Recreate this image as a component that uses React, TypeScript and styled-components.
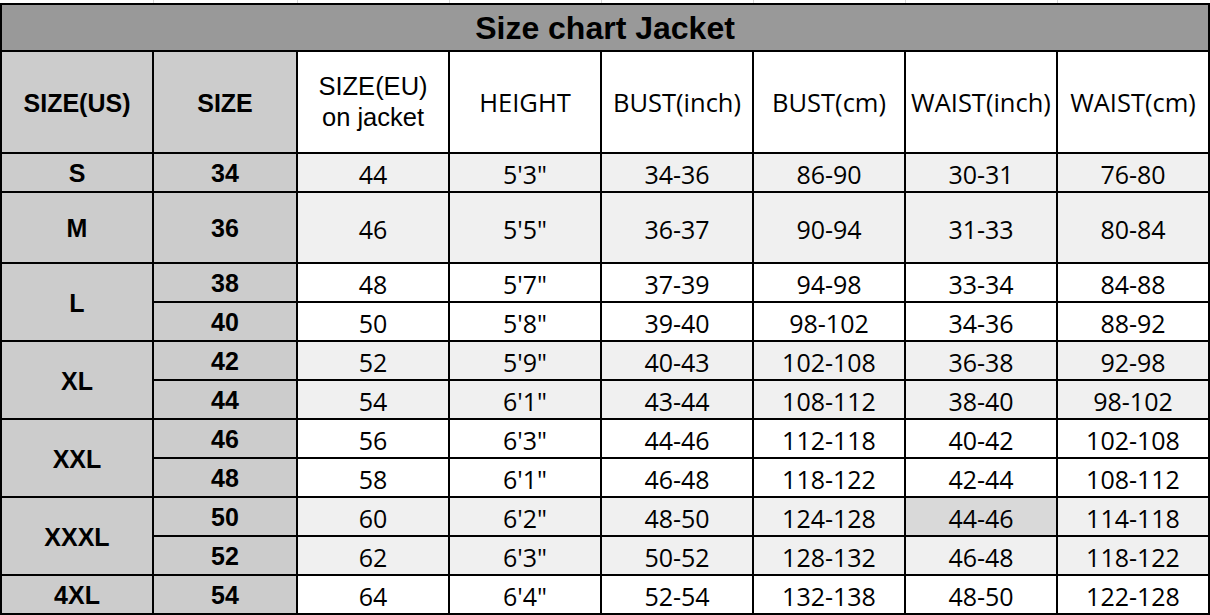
import React from "react";
import styled, { createGlobalStyle, css } from "styled-components";

const GlobalStyle = createGlobalStyle`
  html, body {
    margin: 0;
    padding: 0;
    background: #ffffff;
  }
  body {
    font-family: "Open Sans", "Liberation Sans", Arial, sans-serif;
    color: #000000;
  }
`;

const COLUMNS = "150px 142px repeat(6, 150px)";

const Page = styled.div`
  width: 1210px;
  display: flex;
  flex-direction: column;
`;

const SheetEdge = styled.div`
  display: grid;
  grid-template-columns: ${COLUMNS};
  column-gap: 2px;
  padding: 0 2px;
  height: 3px;
  background: #ffffff;
`;

const EdgeCell = styled.div`
  position: relative;
  &:not(:last-child)::after {
    content: "";
    position: absolute;
    top: 0;
    bottom: 0;
    right: -2px;
    width: 1px;
    background: #d8d8d8;
  }
`;

const Chart = styled.div`
  display: grid;
  grid-template-columns: ${COLUMNS};
  grid-template-rows: 45px 100px 37px 69px repeat(9, 37px);
  gap: 2px;
  padding: 2px;
  background: #000000;
`;

const Title = styled.div`
  grid-column: 1 / -1;
  background: #999999;
  display: flex;
  align-items: center;
  justify-content: center;
  font-family: "Liberation Sans", Arial, sans-serif;
  font-weight: 700;
  font-size: 32px;
  padding-top: 1px;
`;

type Tone = "key" | "white" | "light" | "mark";

const toneColor: Record<Tone, string> = {
  key: "#cccccc",
  white: "#ffffff",
  light: "#f0f0f0",
  mark: "#d9d9d9",
};

const Cell = styled.div<{ $tone: Tone; $span?: number }>`
  background: ${(p) => toneColor[p.$tone]};
  display: flex;
  align-items: center;
  justify-content: center;
  text-align: center;
  white-space: nowrap;
  ${(p) =>
    p.$span && p.$span > 1
      ? css`
          grid-row: span ${p.$span};
        `
      : ""}
`;

const KeyCell = styled(Cell)`
  font-family: "Liberation Sans", Arial, sans-serif;
  font-weight: 700;
  font-size: 25px;
  padding-top: 2px;
`;

const HeadCell = styled(Cell)<{ $arial?: boolean }>`
  font-family: ${(p) =>
    p.$arial ? `"Liberation Sans", Arial, sans-serif` : `"Open Sans", sans-serif`};
  font-size: 25.5px;
  line-height: 31px;
  flex-direction: column;
`;

const ValueCell = styled(Cell)`
  font-family: "Open Sans", sans-serif;
  font-size: 25px;
  padding-top: 2px;
`;

type Group = {
  us: string;
  tone: Tone;
  rows: string[][];
};

const groups: Group[] = [
  { us: "S", tone: "light", rows: [["34", "44", `5'3"`, "34-36", "86-90", "30-31", "76-80"]] },
  { us: "M", tone: "light", rows: [["36", "46", `5'5"`, "36-37", "90-94", "31-33", "80-84"]] },
  {
    us: "L",
    tone: "white",
    rows: [
      ["38", "48", `5'7"`, "37-39", "94-98", "33-34", "84-88"],
      ["40", "50", `5'8"`, "39-40", "98-102", "34-36", "88-92"],
    ],
  },
  {
    us: "XL",
    tone: "light",
    rows: [
      ["42", "52", `5'9"`, "40-43", "102-108", "36-38", "92-98"],
      ["44", "54", `6'1"`, "43-44", "108-112", "38-40", "98-102"],
    ],
  },
  {
    us: "XXL",
    tone: "white",
    rows: [
      ["46", "56", `6'3"`, "44-46", "112-118", "40-42", "102-108"],
      ["48", "58", `6'1"`, "46-48", "118-122", "42-44", "108-112"],
    ],
  },
  {
    us: "XXXL",
    tone: "light",
    rows: [
      ["50", "60", `6'2"`, "48-50", "124-128", "44-46", "114-118"],
      ["52", "62", `6'3"`, "50-52", "128-132", "46-48", "118-122"],
    ],
  },
  { us: "4XL", tone: "white", rows: [["54", "64", `6'4"`, "52-54", "132-138", "48-50", "122-128"]] },
];

const headers = ["HEIGHT", "BUST(inch)", "BUST(cm)", "WAIST(inch)", "WAIST(cm)"];

export default function App() {
  return (
    <>
      <GlobalStyle />
      <Page>
        <SheetEdge>
          {Array.from({ length: 8 }).map((_, i) => (
            <EdgeCell key={i} />
          ))}
        </SheetEdge>
        <Chart>
          <Title>Size chart Jacket</Title>
          <KeyCell $tone="key">SIZE(US)</KeyCell>
          <KeyCell $tone="key">SIZE</KeyCell>
          <HeadCell $tone="white" $arial>
            <span>SIZE(EU)</span>
            <span>on jacket</span>
          </HeadCell>
          {headers.map((h) => (
            <HeadCell key={h} $tone="white">
              {h}
            </HeadCell>
          ))}
          {groups.map((g) => (
            <React.Fragment key={g.us}>
              <KeyCell $tone="key" $span={g.rows.length}>
                {g.us}
              </KeyCell>
              {g.rows.map((row) => (
                <React.Fragment key={row[0]}>
                  <KeyCell $tone="key">{row[0]}</KeyCell>
                  {row.slice(1).map((v, i) => {
                    const marked = g.us === "XXXL" && row[0] === "50" && i === 4;
                    return (
                      <ValueCell key={i} $tone={marked ? "mark" : g.tone}>
                        {v}
                      </ValueCell>
                    );
                  })}
                </React.Fragment>
              ))}
            </React.Fragment>
          ))}
        </Chart>
      </Page>
    </>
  );
}
